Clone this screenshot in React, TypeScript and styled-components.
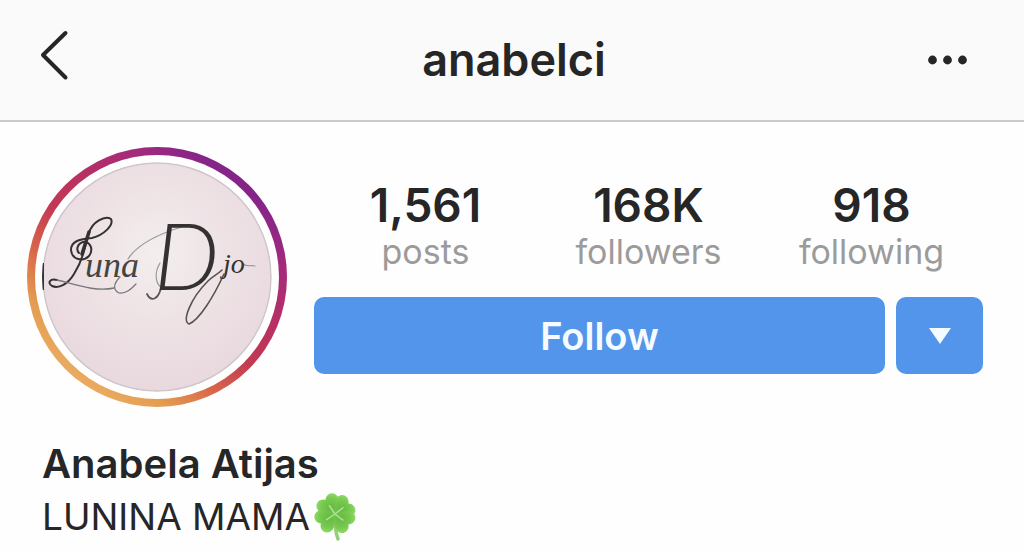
import React from "react";
import styled, { createGlobalStyle } from "styled-components";

const GlobalStyle = createGlobalStyle`
  *, *::before, *::after { box-sizing: border-box; }
  body {
    margin: 0;
    background: #fefefe;
    color: #262626;
    font-family: Inter, "Liberation Sans", sans-serif;
  }
  button { font-family: inherit; border: 0; padding: 0; cursor: pointer; }
`;

const Header = styled.header`
  display: grid;
  grid-template-columns: 1fr auto 1fr;
  align-items: center;
  height: 122px;
  padding: 0 32px 0 36px;
  background: #fafafa;
  border-bottom: 2px solid #cbcbcb;
`;

const Title = styled.h1`
  margin: 0;
  font-size: 45px;
  line-height: 56px;
  font-weight: 600;
`;

const IconButton = styled.button<{ $end?: boolean }>`
  display: flex;
  justify-self: ${(p) => (p.$end ? "end" : "start")};
  padding: ${(p) => (p.$end ? "0 20px" : "0")};
  background: none;
  color: #262626;
`;

const Profile = styled.section`
  display: flex;
  gap: 27px;
  padding: 25px 41px 0 27px;
`;

const StoryRing = styled.a`
  display: block;
  flex: none;
  width: 260px;
  height: 260px;
  padding: 8px;
  border-radius: 50%;
  background: linear-gradient(
    38deg,
    #e9ab60 15%,
    #e49b50 24%,
    #d8664a 35%,
    #c23a52 47%,
    #b73064 60%,
    #a32a7c 74%,
    #842489 84%
  );
`;

const PhotoFrame = styled.span`
  display: block;
  padding: 7px;
  border-radius: 50%;
  background: #fefefe;
`;

const Photo = styled.svg`
  display: block;
  width: 100%;
  height: auto;
  border-radius: 50%;
`;

const Details = styled.div`
  flex: 1;
  min-width: 0;
  padding-top: 31px;
`;

const Stats = styled.ul`
  display: grid;
  grid-template-columns: repeat(3, 1fr);
  margin: 0;
  padding: 0;
  list-style: none;
  text-align: center;
`;

const StatValue = styled.strong`
  display: block;
  font-size: 46px;
  line-height: 54px;
  font-weight: 600;
`;

const StatLabel = styled.span`
  display: block;
  font-size: 34px;
  line-height: 40px;
  color: #9b9b9b;
`;

const Actions = styled.div`
  display: flex;
  gap: 11px;
  margin-top: 25px;
`;

const ActionButton = styled.button<{ $grow?: boolean }>`
  display: flex;
  align-items: center;
  justify-content: center;
  flex: ${(p) => (p.$grow ? "1" : "0 0 87px")};
  height: 77px;
  border-radius: 10px;
  background: #5295ea;
  color: #f4fcff;
  font-size: 38px;
  line-height: 44px;
  font-weight: 600;
`;

const Bio = styled.section`
  padding: 31px 42px 0;
`;

const Name = styled.h2`
  margin: 0;
  font-size: 40px;
  line-height: 52px;
  font-weight: 600;
`;

const BioLine = styled.p`
  display: flex;
  align-items: center;
  gap: 2px;
  margin: 0;
  font-size: 37px;
  line-height: 54px;
`;

const stats = [
  { value: "1,561", label: "posts" },
  { value: "168K", label: "followers" },
  { value: "918", label: "following" },
];

function BackIcon() {
  return (
    <svg width="36" height="66" viewBox="0 0 36 66" fill="none" aria-hidden="true">
      <path d="M29.500 6 7 28 29.500 50.500" stroke="currentColor" strokeWidth="4" strokeLinecap="round" strokeLinejoin="round" />
    </svg>
  );
}

function MoreIcon() {
  return (
    <svg width="48" height="48" viewBox="0 0 48 48" fill="currentColor" aria-hidden="true">
      <circle cx="8.500" cy="24" r="4.400" />
      <circle cx="23.500" cy="24" r="4.400" />
      <circle cx="38.500" cy="24" r="4.400" />
    </svg>
  );
}

function CloverIcon() {
  const leaf = "M0 0C-4 -3 -12 -7 -12 -13C-12 -20 -4 -22 0 -17C4 -22 12 -20 12 -13C12 -7 4 -3 0 0Z";
  return (
    <svg width="46" height="50" viewBox="0 0 46 50" role="img" aria-label="four leaf clover">
      <defs>
        <radialGradient id="leaf" gradientUnits="userSpaceOnUse" cx="0" cy="-7" r="16">
          <stop offset="0" stopColor="#63ba42" />
          <stop offset="0.6" stopColor="#78c94f" />
          <stop offset="1" stopColor="#93dc6c" />
        </radialGradient>
      </defs>
      <path d="M23 23C23 32 23 40 26 47" fill="none" stroke="#94cf78" strokeWidth="3.500" strokeLinecap="round" />
      {[-34, 52, 128, 236].map((angle) => (
        <g key={angle} transform={`translate(23 22) rotate(${angle})`}>
          <path d={leaf} fill="url(#leaf)" />
          <path d="M0 0V-10" stroke="#b0e294" strokeWidth="1.500" strokeLinecap="round" />
        </g>
      ))}
    </svg>
  );
}

function ProfilePhoto() {
  return (
    <Photo viewBox="0 0 230 230" role="img" aria-label="Luna Djo">
      <defs>
        <radialGradient id="paper" cx="0.5" cy="0.4" r="0.6">
          <stop offset="0" stopColor="#f3eeee" />
          <stop offset="0.5" stopColor="#eee2e5" />
          <stop offset="1" stopColor="#e9d9de" />
        </radialGradient>
      </defs>
      <circle cx="115" cy="115" r="114" fill="url(#paper)" stroke="#cfc6ca" strokeWidth="1.500" />
      <path d="M1 101V128" stroke="#333" strokeWidth="2" />
      <g fill="none" stroke="#333132" strokeLinecap="round" strokeLinejoin="round">
        {/* treble clef */}
        <path d="M45 76C43 88 39 101 32 112C26 122 17 127 10 124C5 121 8 116 15 118" strokeWidth="2" />
        <path d="M40 92L47 70" strokeWidth="3.500" />
        <path d="M47 71C50 60 63 53 69 57C72 63 62 73 50 76C38 77 29 79 29 88C30 98 41 100 47 94C52 87 48 79 41 80C35 82 34 88 37 91" strokeWidth="2" />
        <path d="M15 118C35 123 54 130 72 126" strokeWidth="1.300" stroke="#777" />
        <path d="M78 115C71 122 71 128 77 131C84 132 89 127 94 122" strokeWidth="1.200" stroke="#777" />
        {/* swashes around the capital */}
        <path d="M86 97C96 81 119 71 143 64" strokeWidth="1.300" stroke="#999" />
        <path d="M119 126C116 138 109 140 105 132" strokeWidth="1.800" stroke="#555" />
        <path d="M118 101C112 111 113 122 121 127" strokeWidth="1.200" stroke="#999" />
        {/* long descending loop */}
        <path d="M182 112C171 136 157 158 147 162C140 159 148 137 166 119C171 114 176 112 180 108" strokeWidth="1.600" stroke="#555" />
        <path d="M201 102C205 105 209 103 213 104" strokeWidth="1.200" stroke="#999" />
      </g>
      <g fill="#333132" fontStyle="italic" fontFamily='"Liberation Serif", serif'>
        <text x="43" y="115" fontSize="36" fill="#444">una</text>
        <text x="112" y="128" fontSize="92" fontWeight="300" fontFamily="Lato, sans-serif">D</text>
        <text x="181" y="111" fontSize="28">jo</text>
      </g>
    </Photo>
  );
}

export default function App() {
  return (
    <>
      <GlobalStyle />
      <Header>
        <IconButton aria-label="Back">
          <BackIcon />
        </IconButton>
        <Title>anabelci</Title>
        <IconButton $end aria-label="More options">
          <MoreIcon />
        </IconButton>
      </Header>
      <main>
        <Profile>
          <StoryRing href="#story" aria-label="View story">
            <PhotoFrame>
              <ProfilePhoto />
            </PhotoFrame>
          </StoryRing>
          <Details>
            <Stats>
              {stats.map((s) => (
                <li key={s.label}>
                  <StatValue>{s.value}</StatValue>
                  <StatLabel>{s.label}</StatLabel>
                </li>
              ))}
            </Stats>
            <Actions>
              <ActionButton $grow>Follow</ActionButton>
              <ActionButton aria-label="Suggested accounts">
                <svg width="24" height="18" viewBox="0 0 24 18" aria-hidden="true">
                  <path d="M1 1H23L12 17Z" fill="currentColor" />
                </svg>
              </ActionButton>
            </Actions>
          </Details>
        </Profile>
        <Bio>
          <Name>Anabela Atijas</Name>
          <BioLine>
            LUNINA MAMA
            <CloverIcon />
          </BioLine>
        </Bio>
      </main>
    </>
  );
}
